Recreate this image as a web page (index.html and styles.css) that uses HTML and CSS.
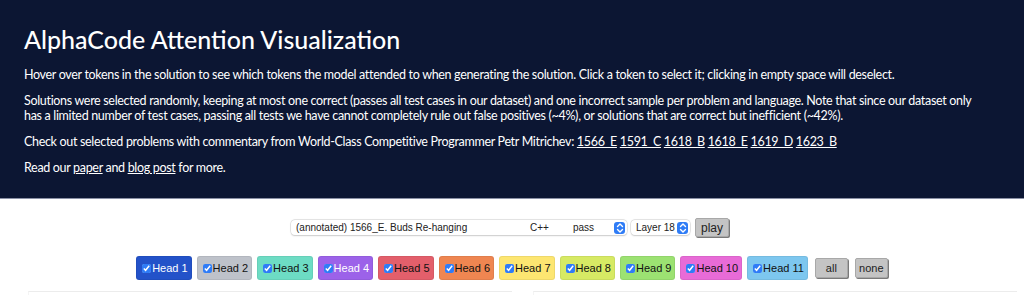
FILE: index.html
```html
<!DOCTYPE html>
<html lang="en">
<head>
    <meta charset="UTF-8">
    <meta name="viewport" content="width=device-width, initial-scale=1.0">
    <title>AlphaCode Attention Visualization</title>
    <link rel="stylesheet" href="styles.css">
</head>
<body>
    <div class="header">
        <h1>AlphaCode Attention Visualization</h1>
        <p>Hover over tokens in the solution to see which tokens the model attended to when generating the solution. Click a token to select it; clicking in empty space will deselect.</p>
        <p>Solutions were selected randomly, keeping at most one correct (passes all test cases in our dataset) and one incorrect sample per problem and language. Note that since our dataset only has a limited number of test cases, passing all tests we have cannot completely rule out false positives (~4%), or solutions that are correct but inefficient (~42%).</p>
        <p>Check out selected problems with commentary from World-Class Competitive Programmer Petr Mitrichev: <a href="#">1566_E</a> <a href="#">1591_C</a> <a href="#">1618_B</a> <a href="#">1618_E</a> <a href="#">1619_D</a> <a href="#">1623_B</a></p>
        <p>Read our <a href="#">paper</a> and <a href="#">blog post</a> for more.</p>
    </div>

    <div class="controls">
        <div class="select sample-select">
            <span class="opt-title">(annotated) 1566_E. Buds Re-hanging</span>
            <span class="opt-lang">C++</span>
            <span class="opt-result">pass</span>
            <span class="arrows"><svg width="10" height="12" viewBox="0 0 10 12"><path d="M2.5 4.5 L5 2 L7.5 4.5 M2.5 7.5 L5 10 L7.5 7.5" fill="none" stroke="#fff" stroke-width="1.4" stroke-linecap="round" stroke-linejoin="round"/></svg></span>
        </div>
        <div class="select layer-select">
            <span>Layer 18</span>
            <span class="arrows"><svg width="10" height="12" viewBox="0 0 10 12"><path d="M2.5 4.5 L5 2 L7.5 4.5 M2.5 7.5 L5 10 L7.5 7.5" fill="none" stroke="#fff" stroke-width="1.4" stroke-linecap="round" stroke-linejoin="round"/></svg></span>
        </div>
        <button class="gray-btn play-btn">play</button>
    </div>

    <div class="heads">
        <label class="head h1"><input type="checkbox" checked>Head 1</label>
        <label class="head h2"><input type="checkbox" checked>Head 2</label>
        <label class="head h3"><input type="checkbox" checked>Head 3</label>
        <label class="head h4"><input type="checkbox" checked>Head 4</label>
        <label class="head h5"><input type="checkbox" checked>Head 5</label>
        <label class="head h6"><input type="checkbox" checked>Head 6</label>
        <label class="head h7"><input type="checkbox" checked>Head 7</label>
        <label class="head h8"><input type="checkbox" checked>Head 8</label>
        <label class="head h9"><input type="checkbox" checked>Head 9</label>
        <label class="head h10"><input type="checkbox" checked>Head 10</label>
        <label class="head h11"><input type="checkbox" checked>Head 11</label>
        <button class="gray-btn small-btn">all</button>
        <button class="gray-btn small-btn">none</button>
    </div>

    <div class="panels">
        <div class="panel"></div>
        <div class="panel"></div>
    </div>
</body>
</html>
```

FILE: styles.css
```css
body {
    margin: 0;
    background: #fff;
    font-family: "Liberation Sans", Arial, sans-serif;
}

.header {
    background: #0c1633;
    color: #fff;
    padding: 24px 36px 23px 24px;
    border-bottom: 1px solid #8a90a6;
    font-family: Lato, sans-serif;
}

.header h1 {
    font-size: 25px;
    font-weight: 500;
    line-height: 30px;
    margin: 0 0 13px 0;
}

.header p {
    font-size: 12.5px;
    line-height: 15px;
    letter-spacing: -0.32px;
    margin: 0 0 11px 0;
}

.header p:last-child {
    margin-bottom: 0;
}

.header a {
    color: #fff;
}

.controls {
    display: flex;
    justify-content: center;
    align-items: center;
    gap: 4px;
    margin-top: 19px;
    padding-right: 4px;
}

.select {
    display: flex;
    align-items: center;
    height: 15px;
    background: #fff;
    border-radius: 4px;
    box-shadow: 0 0 0 0.5px #d0d0d0, 0 0.5px 1.5px rgba(0, 0, 0, 0.2);
    font-size: 10px;
    color: #222;
    padding: 0 2px 0 5px;
}

.sample-select {
    width: 329px;
}

.opt-title {
    width: 234px;
}

.opt-lang {
    width: 43px;
}

.opt-result {
    flex: 1;
}

.layer-select {
    width: 52px;
    justify-content: space-between;
}

.arrows {
    display: flex;
    align-items: center;
    justify-content: center;
    width: 11px;
    height: 12px;
    background: #2f7cf6;
    border-radius: 3px;
}

.gray-btn {
    font-family: "Liberation Sans", Arial, sans-serif;
    background: #c4c4c4;
    border: 1px solid #a8a8a8;
    border-radius: 2px;
    box-shadow: 1px 1px 0 #7a7a7a;
    color: #222;
    cursor: pointer;
    padding: 0;
}

.play-btn {
    font-size: 12px;
    width: 34px;
    height: 19px;
    margin-left: 1px;
}

.heads {
    display: flex;
    justify-content: center;
    align-items: center;
    gap: 5px;
    margin-top: 19px;
}

.head {
    display: flex;
    align-items: center;
    height: 22px;
    padding: 0 3px 0 5px;
    border-radius: 3px;
    border: 1px solid rgba(0, 0, 0, 0.06);
    font-size: 11px;
    color: #111;
}

.head input {
    width: 9px;
    height: 9px;
    margin: 0 1px 0 0;
    accent-color: #2f7cf6;
}

.h1 { background: #2352c9; color: #fff; }
.h2 { background: #bec2ca; }
.h3 { background: #6ddcc4; }
.h4 { background: #9c62e9; color: #fff; }
.h5 { background: #e35f6b; }
.h6 { background: #ef8651; }
.h7 { background: #fde671; }
.h8 { background: #d7ea64; }
.h9 { background: #9ce272; }
.h10 { background: #e86bd7; }
.h11 { background: #7dc7ef; }

.small-btn {
    font-size: 11px;
    width: 33px;
    height: 20px;
    margin-left: 2px;
}

.panels {
    display: flex;
    gap: 21px;
    padding: 11px 7px 0 28px;
}

.panel {
    flex: 1;
    height: 40px;
    border-top: 1px solid #ececec;
    border-left: 1px solid #f4f4f4;
}
```
